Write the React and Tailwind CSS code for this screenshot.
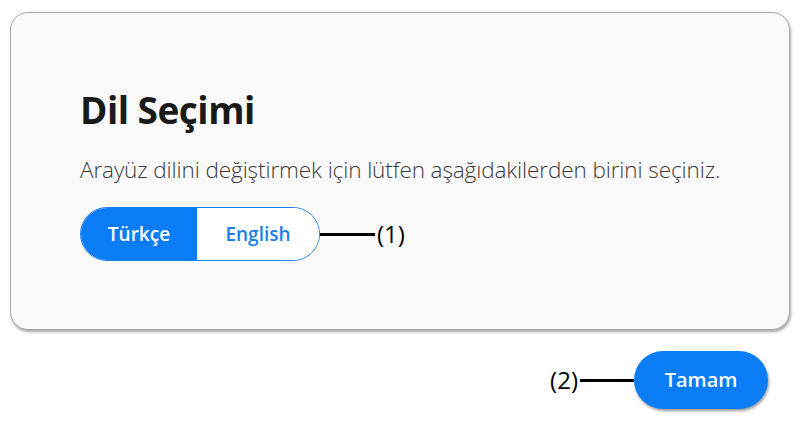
export default function App() {
  return (
    <div
      className="w-[806px] h-[423px] bg-white pt-[12px] pl-[10px] pr-[16px]"
      style={{ fontFamily: '"Open Sans", "Noto Sans", sans-serif' }}
    >
      <div className="w-[780px] h-[318px] rounded-[18px] bg-[#fafafa] border border-[#a8a8a8] shadow-[1px_2px_3px_rgba(0,0,0,0.35)] pl-[69px] pt-[72px]">
        <h1 className="text-[37px] font-bold text-[#1a1a1a] leading-[50px] tracking-[-0.5px]">Dil Seçimi</h1>
        <p className="mt-[20px] text-[22.5px] font-light text-[#3a3a3a] leading-[30px] tracking-[-0.1px]">
          Arayüz dilini değiştirmek için lütfen aşağıdakilerden birini seçiniz.
        </p>
        <div className="mt-[22px] flex items-center">
          <div className="flex h-[54px] rounded-full border-[1.5px] border-[#1a7fe8] overflow-hidden">
            <button className="w-[116px] bg-[#0a7cf5] text-white text-[19px] font-semibold">Türkçe</button>
            <button className="w-[122px] bg-white text-[#1a7fe8] text-[19px] font-semibold">English</button>
          </div>
          <div className="w-[55px] h-[3px] bg-black" />
          <span className="ml-[2px] text-[24px] text-black">(1)</span>
        </div>
      </div>
      <div className="mt-[21px] flex items-center justify-end pr-[22px]">
        <span className="mr-[2px] text-[24px] text-black">(2)</span>
        <div className="w-[54px] h-[3px] bg-black" />
        <button className="w-[134px] h-[58px] rounded-full bg-[#0a7cf5] text-white text-[20px] font-semibold shadow-[1px_2px_3px_rgba(0,0,0,0.4)]">
          Tamam
        </button>
      </div>
    </div>
  );
}
